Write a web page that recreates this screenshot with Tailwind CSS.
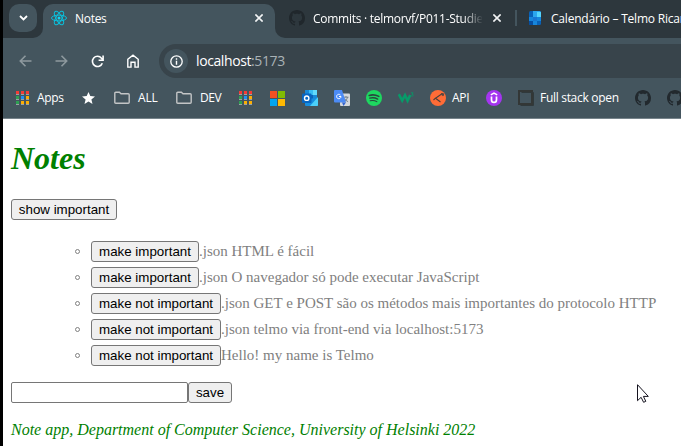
<!DOCTYPE html>
<html lang="pt">
<head>
<meta charset="utf-8">
<title>Notes</title>
<script src="https://cdn.jsdelivr.net/npm/@tailwindcss/browser@4"></script>
</head>
<body class="w-[681px] h-[446px] overflow-hidden bg-white">
<svg class="hidden">
  <symbol id="github" viewBox="0 0 16 16"><path d="M8 0C3.58 0 0 3.58 0 8c0 3.54 2.29 6.53 5.47 7.59.4.07.55-.17.55-.38 0-.19-.01-.82-.01-1.49-2.01.37-2.53-.49-2.69-.94-.09-.23-.48-.94-.82-1.13-.28-.15-.68-.52-.01-.53.63-.01 1.08.58 1.23.82.72 1.21 1.87.87 2.33.66.07-.52.28-.87.51-1.07-1.78-.2-3.64-.89-3.64-3.95 0-.87.31-1.59.82-2.15-.08-.2-.36-1.02.08-2.12 0 0 .67-.21 2.2.82.64-.18 1.32-.27 2-.27s1.36.09 2 .27c1.53-1.04 2.2-.82 2.2-.82.44 1.1.16 1.92.08 2.12.51.56.82 1.27.82 2.15 0 3.07-1.87 3.75-3.65 3.95.29.25.54.73.54 1.48 0 1.07-.01 1.93-.01 2.2 0 .21.15.46.55.38A8.01 8.01 0 0 0 16 8c0-4.42-3.58-8-8-8z"/></symbol>
  <symbol id="folder" viewBox="0 0 16 16"><path d="M.8 3.2q0-1 1-1h3.6l1.6 1.6h7.2q1 0 1 1v7.4q0 1-1 1H1.8q-1 0-1-1z" fill="none" stroke="#c3c5c6" stroke-width="1.4"/></symbol>
  <symbol id="grid" viewBox="0 0 13 14" shape-rendering="crispEdges">
    <path fill="#f43b35" d="M0 0h3v3H0zM5 0h3v3H5zM10 0h3v3h-3z"/>
    <path fill="#9aa1a4" d="M0 3h3v1H0zM5 3h3v1H5zM10 3h3v1h-3zM0 8h3v1H0zM5 8h3v1H5zM10 8h3v1h-3zM0 13h3v1H0zM5 13h3v1H5zM10 13h3v1h-3z"/>
    <path fill="#2da052" d="M0 5h3v3H0zM0 10h3v3H0z"/><path fill="#1f8ef5" d="M5 5h3v3H5z"/>
    <path fill="#fbae05" d="M10 5h3v3h-3zM5 10h3v3H5zM10 10h3v3h-3z"/>
  </symbol>
  <symbol id="close" viewBox="0 0 8 8"><path d="M.4.4l7.2 7.2M7.6.4L.4 7.6" stroke="#f2f4f5" stroke-width="1.6" fill="none"/></symbol>
</svg>

<div class="flex w-[681px] h-[446px] border-l-[3px] border-black">
<div class="flex flex-col w-[678px] shrink-0">
  <header class="bg-[#44555e] h-[119px] shrink-0 border-b border-[#77848b] text-white font-['Open_Sans','Noto_Sans',sans-serif] text-[12px] leading-4 whitespace-nowrap overflow-hidden">
    <!-- tab strip -->
    <div class="flex h-[38px] bg-[#2d373d] overflow-hidden">
      <div class="w-10 shrink-0 bg-[#44555e]"><div class="w-10 h-[38px] bg-[#2d373d] rounded-br-[10px] pt-1 pl-[6px]">
        <div class="size-7 rounded-[10px] bg-[#44555e] flex items-center justify-center"><svg class="w-[9px] h-[6px]" viewBox="0 0 9 6"><path d="M1 1l3.5 3.5L8 1" fill="none" stroke="#fff" stroke-width="1.8"/></svg></div>
      </div></div>
      <div class="w-[232px] shrink-0 bg-[#2d373d] pt-1">
        <div class="h-[34px] bg-[#44555e] rounded-t-[10px] flex pl-2 pr-[12px] pt-[6px]">
          <svg class="size-4 shrink-0" viewBox="0 0 16 16"><g fill="none" stroke="#0bbfdb" stroke-width="1"><ellipse cx="8" cy="8" rx="7.5" ry="2.9"/><ellipse cx="8" cy="8" rx="7.5" ry="2.9" transform="rotate(60 8 8)"/><ellipse cx="8" cy="8" rx="7.5" ry="2.9" transform="rotate(120 8 8)"/></g><circle cx="8" cy="8" r="1.5" fill="#10d5f2"/></svg>
          <span class="ml-2 mt-px tracking-[-0.3px]">Notes</span>
          <svg class="size-2 ml-auto mt-1"><use href="#close"/></svg>
        </div>
      </div>
      <div class="grow bg-[#44555e]"><div class="h-[38px] bg-[#2d373d] rounded-bl-[10px] flex pt-[10px] pl-[14px]">
        <svg class="size-4 shrink-0" fill="#20272c"><use href="#github"/></svg>
        <div class="ml-2 mt-px w-[169px] shrink-0 overflow-hidden tracking-[-0.27px] [mask-image:linear-gradient(to_right,#000_150px,transparent_170px)]">Commits · telmorvf/P011-Studies</div>
        <svg class="size-2 shrink-0 mt-1 ml-[11px]"><use href="#close"/></svg>
        <div class="w-[2px] h-4 bg-[#44555e] ml-[14px] shrink-0"></div>
        <svg class="w-3 h-[14px] shrink-0 ml-[12px] mt-[1px]" viewBox="0 0 12 14"><defs><clipPath id="cal"><rect width="12" height="14" rx="1.5"/></clipPath></defs><g clip-path="url(#cal)"><path fill="#0861b8" d="M0 0h12v14H0z"/><path fill="#2ba6ee" d="M4 0h8v6H4z"/><path fill="#56d5fb" d="M8 1h4v5H8z"/><path fill="#1686dc" d="M0 6h4v4H0zM4 10h4v4H4zM8 6h4v4H8z"/><path fill="#1976d2" d="M4 6h4v4H4z"/><path fill="#064da1" d="M0 10h4v4H0z"/></g></svg>
        <span class="ml-[10px] mt-px tracking-[-0.2px]">Calendário – Telmo Ricardo</span>
      </div></div>
    </div>
    <!-- address row -->
    <div class="h-[46px] flex items-center">
      <svg class="w-[13px] h-3 ml-4 shrink-0" viewBox="0 0 13 12"><path d="M12.5 6H1.4M6.5.8L1.3 6l5.2 5.2" fill="none" stroke="#8e999e" stroke-width="1.6"/></svg>
      <svg class="w-[13px] h-3 ml-[23px] shrink-0" viewBox="0 0 13 12"><path d="M.5 6h11.1M6.5.8L11.7 6l-5.2 5.2" fill="none" stroke="#8e999e" stroke-width="1.6"/></svg>
      <svg class="size-[13px] ml-[23px] shrink-0" viewBox="0 0 13 13"><path d="M11.3 8.2A5.1 5.1 0 1 1 10.5 3.2L12 4.8M12.1.6v4.6H7.6" fill="none" stroke="#fff" stroke-width="1.6"/></svg>
      <svg class="w-3 h-[14px] ml-[23px] shrink-0" viewBox="0 0 12 14"><path d="M.8 5.3L6 1.2l5.2 4.1v7.8H8V8.2H4v4.9H.8z" fill="none" stroke="#fff" stroke-width="1.4"/></svg>
      <div class="ml-5 grow h-[34px] bg-[#38444b] rounded-l-full flex items-center pl-[5px]">
        <div class="size-6 rounded-full bg-[#44555e] flex items-center justify-center shrink-0"><svg class="size-[13px]" viewBox="0 0 13 13"><circle cx="6.5" cy="6.5" r="5.7" fill="none" stroke="#fff" stroke-width="1.3"/><path d="M5.8 5.8h1.4v4H5.8zM5.8 3.3h1.4v1.4H5.8z" fill="#fff"/></svg></div>
        <span class="ml-2 text-[14px] leading-5 tracking-[-0.4px]">localhost<span class="text-[#a9b2b6]">:5173</span></span>
      </div>
    </div>
    <!-- bookmarks -->
    <div class="flex h-[28px] items-center pl-[13px]">
      <div class="flex items-center w-[66px] shrink-0"><svg class="w-[13px] h-[14px] shrink-0"><use href="#grid"/></svg><span class="ml-2 tracking-[-0.3px]">Apps</span></div>
      <svg class="w-[13px] h-3 shrink-0 mr-[19px]" viewBox="0 0 13 12"><path fill="#fff" d="M6.5 0l1.8 4.1 4.7.4-3.6 3 1.1 4.5-4-2.4-4 2.4 1.1-4.5L0 4.5l4.7-.4z"/></svg>
      <div class="flex items-center w-[62px] shrink-0"><svg class="size-4 shrink-0"><use href="#folder"/></svg><span class="ml-2 tracking-[-0.2px]">ALL</span></div>
      <div class="flex items-center w-[63px] shrink-0"><svg class="size-4 shrink-0"><use href="#folder"/></svg><span class="ml-2 tracking-[-0.4px]">DEV</span></div>
      <svg class="w-[13px] h-[14px] shrink-0 mr-[18px]"><use href="#grid"/></svg>
      <svg class="size-[15px] shrink-0 mr-[17px]" viewBox="0 0 15 15" shape-rendering="crispEdges"><path fill="#f35022" d="M0 0h7v7H0z"/><path fill="#80bb03" d="M8 0h7v7H8z"/><path fill="#03a5f0" d="M0 8h7v7H0z"/><path fill="#ffb903" d="M8 8h7v7H8z"/></svg>
      <svg class="size-4 shrink-0 mr-4" viewBox="0 0 16 16"><path fill="#1889d8" d="M3 0h12v9H3z"/><path fill="#37bdf5" d="M7 0h8v5H7z"/><path fill="#62dafc" d="M11 0h4v5h-4z"/><path fill="#0c63b8" d="M7 5h4v5H7z"/><path fill="#168ee0" d="M3 9l13-1v7q0 1-1 1H4q-1 0-1-1z"/><path fill="#4bd0fa" d="M16 7v8q0 1-1 1H8z"/><rect y="3.5" width="9.5" height="9.5" rx="1" fill="#0866c1"/><circle cx="4.7" cy="8.2" r="2.2" fill="none" stroke="#fff" stroke-width="1.4"/></svg>
      <svg class="size-4 shrink-0 mr-4" viewBox="0 0 16 16"><rect x="6" y="3.5" width="10" height="12.5" rx="1" fill="#d6d9dc"/><path d="M9.5 7.2h5M12 6v1.2M13.6 7.2q-.6 3-3.3 4.5M10.6 8.5q1 2.3 3.5 3.2" stroke="#6e7c87" fill="none" stroke-width=".9"/><path d="M1 0h7l4 12.5H1q-1 0-1-1V1q0-1 1-1z" fill="#4c8bf5"/><path d="M8 12.5h4L9.5 16z" fill="#3666ce"/><path d="M6.4 5A2.2 2.2 0 1 0 7 6.5H5" stroke="#fff" fill="none"/></svg>
      <svg class="size-4 shrink-0 mr-4" viewBox="0 0 16 16"><circle cx="8" cy="8" r="8" fill="#1ed760"/><g fill="none" stroke="#28483e" stroke-linecap="round"><path d="M3.2 5.4q5-1.5 9.6 1" stroke-width="1.6"/><path d="M3.7 8.2q4.3-1.2 8 .9" stroke-width="1.3"/><path d="M4.2 10.8q3.7-.9 6.6.8" stroke-width="1.1"/></g></svg>
      <svg class="size-4 shrink-0 mr-4" viewBox="0 0 16 16"><path d="M.8 4.2l3.4 6.3L7 5.2l2.6 5.5L12.2 5" fill="none" stroke="#079b69" stroke-width="2.6"/><path d="M13 2.8h2.2L14 4.2q1.5.1 1.3 1.3-.8 1.2-2.2.3" fill="none" stroke="#079b69" stroke-width=".8"/></svg>
      <div class="flex items-center w-[56px] shrink-0"><svg class="size-4 shrink-0" viewBox="0 0 16 16"><circle cx="8" cy="8" r="8" fill="#ff6c37"/><path d="M12.3 3.5L5.5 8.2l5 3.8M5.5 8.2L3.5 10" fill="none" stroke="#493f3b" stroke-width="1.1"/><path d="M11 3.3q2-1 3.1.5.5 1.8-1.1 2.5L11 4.8z" fill="#5b4841"/><path d="M8 8.3l3-2 2 3-1.5 2.5z" fill="#ff6c37"/></svg><span class="ml-[6px] tracking-[-0.3px]">API</span></div>
      <svg class="size-4 shrink-0 mr-4" viewBox="0 0 16 16"><circle cx="8" cy="8" r="8" fill="#a435f0"/><path d="M5.5 6.4v3.3q0 2.7 2.5 2.7t2.5-2.7V6.4" fill="none" stroke="#fff" stroke-width="1.7"/><path d="M4.8 4.9L8 3.2l3.2 1.7" fill="none" stroke="#fff" stroke-width="1.5"/></svg>
      <div class="flex items-center w-[117px] shrink-0"><svg class="size-4 shrink-0" viewBox="0 0 16 16"><path fill="none" stroke="#333736" stroke-width="2" d="M1 1h13v13H1z"/><path fill="none" stroke="#30393b" stroke-width="1" d="M3.5 2.5h12v13H2.5"/></svg><span class="ml-[6px] tracking-[-0.3px]">Full stack open</span></div>
      <svg class="size-4 shrink-0 mr-4" fill="#22292e"><use href="#github"/></svg>
      <svg class="size-4 shrink-0" fill="#22292e"><use href="#github"/></svg>
    </div>
  </header>

  <main class="bg-white grow pl-2 font-['Liberation_Serif',serif] text-[16px] leading-[18px]">
    <h1 class="mt-[21px] text-[32px] leading-[37px] font-bold italic text-[green]">Notes</h1>
    <button class="block mt-[22px] w-[106px] h-[21px] border border-[#767676] rounded-[3px] bg-[#efefef] text-black font-['Liberation_Sans',Arial,sans-serif] text-[13.333px] leading-[15px] whitespace-nowrap">show important</button>
    <ul class="mt-[18px] pl-[64px] text-[15px] text-[gray] whitespace-nowrap [&>li]:flex [&>li]:items-center [&>li]:h-[26px] [&_button]:shrink-0 [&_button]:h-[21px] [&_button]:border [&_button]:border-[#767676] [&_button]:rounded-[3px] [&_button]:bg-[#efefef] [&_button]:text-black [&_button]:font-['Liberation_Sans',Arial,sans-serif] [&_button]:text-[13.333px] [&_button]:leading-[15px] [&_i]:shrink-0 [&_i]:size-[5px] [&_i]:mr-[11px] [&_i]:border [&_i]:border-[gray] [&_i]:rounded-full">
      <li><i></i><button class="w-[108px]">make important</button><span>.json HTML é fácil</span></li>
      <li><i></i><button class="w-[108px]">make important</button><span>.json O navegador só pode executar JavaScript</span></li>
      <li><i></i><button class="w-[130px]">make not important</button><span>.json GET e POST são os métodos mais importantes do protocolo HTTP</span></li>
      <li><i></i><button class="w-[130px]">make not important</button><span>.json telmo via front-end via localhost:5173</span></li>
      <li><i></i><button class="w-[130px]">make not important</button><span>Hello! my name is Telmo</span></li>
    </ul>
    <form class="mt-[14px] flex">
      <input class="w-[177px] h-[21px] border border-[#767676] rounded-[2px] bg-white">
      <button type="button" class="w-[44px] h-[21px] border border-[#767676] rounded-[3px] bg-[#efefef] text-black font-['Liberation_Sans',Arial,sans-serif] text-[13.333px] leading-[15px]">save</button>
    </form>
    <footer class="mt-[18px] italic text-[green] whitespace-nowrap">Note app, Department of Computer Science, University of Helsinki 2022</footer>
  </main>
</div>
</div>
<svg class="absolute left-[637px] top-[384px] w-3 h-[19px]" viewBox="0 0 12 19"><path d="M.5.7v16l3.6-3.4 2.5 5 2.2-1-2.4-4.9h4.9z" fill="#fff" stroke="#15131f" stroke-width="1"/></svg>
</body>
</html>
